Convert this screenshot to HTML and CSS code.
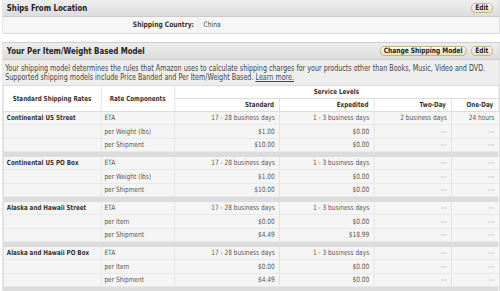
FILE: index.html
```html
<!DOCTYPE html>
<html>
<head>
<meta charset="utf-8">
<link rel="stylesheet" href="styles.css">
</head>
<body>
<div class="frame">
<div class="page">
  <section class="box">
    <div class="box-head">
      <h2>Ships From Location</h2>
      <div class="btns"><button class="btn">Edit</button></div>
    </div>
    <div class="kv">
      <span class="k">Shipping Country:</span>
      <span class="v">China</span>
    </div>
  </section>

  <section class="box box2">
    <div class="box-head">
      <h2>Your Per Item/Weight Based Model</h2>
      <div class="btns"><button class="btn">Change Shipping Model</button><button class="btn">Edit</button></div>
    </div>
    <div class="desc">
      <span class="line">Your shipping model determines the rules that Amazon uses to calculate shipping charges for your products other than Books, Music, Video and DVD.</span>
      <span class="line"><span>Supported shipping models include Price Banded and Per Item/Weight Based.</span> <a href="#">Learn more.</a></span>
    </div>
    <table class="rates">
      <colgroup>
        <col class="c1"><col class="c2"><col class="c3"><col class="c4"><col class="c5"><col class="c6">
      </colgroup>
      <thead>
        <tr>
          <th rowspan="2" class="ctr">Standard Shipping Rates</th>
          <th rowspan="2" class="ctr">Rate Components</th>
          <th colspan="4" class="ctr">Service Levels</th>
        </tr>
        <tr>
          <th class="r">Standard</th>
          <th class="r">Expedited</th>
          <th class="r">Two-Day</th>
          <th class="r">One-Day</th>
        </tr>
      </thead>
      <tbody>
        <tr><td class="name">Continental US Street</td><td>ETA</td><td class="r">17 - 28 business days</td><td class="r">1 - 3 business days</td><td class="r">2 business days</td><td class="r">24 hours</td></tr>
        <tr class="mid"><td></td><td>per Weight (lbs)</td><td class="r">$1.00</td><td class="r">$0.00</td><td class="r na">---</td><td class="r na">---</td></tr>
        <tr><td></td><td>per Shipment</td><td class="r">$10.00</td><td class="r">$0.00</td><td class="r na">---</td><td class="r na">---</td></tr>
        <tr class="sep"><td colspan="6"></td></tr>
        <tr><td class="name">Continental US PO Box</td><td>ETA</td><td class="r">17 - 28 business days</td><td class="r">1 - 3 business days</td><td class="r na">---</td><td class="r na">---</td></tr>
        <tr class="mid"><td></td><td>per Weight (lbs)</td><td class="r">$1.00</td><td class="r">$0.00</td><td class="r na">---</td><td class="r na">---</td></tr>
        <tr><td></td><td>per Shipment</td><td class="r">$10.00</td><td class="r">$0.00</td><td class="r na">---</td><td class="r na">---</td></tr>
        <tr class="sep"><td colspan="6"></td></tr>
        <tr><td class="name">Alaska and Hawaii Street</td><td>ETA</td><td class="r">17 - 28 business days</td><td class="r">1 - 3 business days</td><td class="r na">---</td><td class="r na">---</td></tr>
        <tr class="mid"><td></td><td>per Item</td><td class="r">$0.00</td><td class="r">$0.00</td><td class="r na">---</td><td class="r na">---</td></tr>
        <tr><td></td><td>per Shipment</td><td class="r">$4.49</td><td class="r">$18.99</td><td class="r na">---</td><td class="r na">---</td></tr>
        <tr class="sep"><td colspan="6"></td></tr>
        <tr><td class="name">Alaska and Hawaii PO Box</td><td>ETA</td><td class="r">17 - 28 business days</td><td class="r">1 - 3 business days</td><td class="r na">---</td><td class="r na">---</td></tr>
        <tr class="mid"><td></td><td>per Item</td><td class="r">$0.00</td><td class="r">$0.00</td><td class="r na">---</td><td class="r na">---</td></tr>
        <tr><td></td><td>per Shipment</td><td class="r">$4.49</td><td class="r">$0.00</td><td class="r na">---</td><td class="r na">---</td></tr>
        <tr class="sep"><td colspan="6"></td></tr>
      </tbody>
    </table>
  </section>
</div>
</div>
</body>
</html>
```

FILE: styles.css
```css
html, body {
  margin: 0;
  padding: 0;
  background: #ffffff;
}

.frame {
  width: 500px;
  height: 291px;
  overflow: hidden;
}

.page {
  width: 622px;
  padding-left: 2.5px;
  transform: scaleX(0.8);
  transform-origin: 0 0;
  font-family: "DejaVu Sans", Verdana, sans-serif;
  color: #333;
}

.box {
  border-left: 1px solid #d4d4d4;
  border-right: 1px solid #d4d4d4;
}

.box2 {
  margin-top: 8px;
  border-top: 1px solid #cfcfcf;
}

.box-head {
  display: flex;
  align-items: center;
  justify-content: space-between;
  height: 16px;
  padding: 0 8px 0 5px;
  background: linear-gradient(#eeeeee, #dcdcdc);
  border-bottom: 1px solid #cccccc;
}

.box-head h2 {
  margin: 0;
  font-size: 8.8px;
  font-weight: bold;
  color: #222;
}

.btns {
  display: flex;
  gap: 6px;
}

.btn {
  height: 10px;
  padding: 0 4px;
  border: 1px solid #c2b07a;
  border-radius: 5px;
  background: linear-gradient(#fffef6, #e6dfbf);
  font-family: "DejaVu Sans", Verdana, sans-serif;
  font-size: 7.4px;
  font-weight: bold;
  line-height: 8px;
  color: #222;
}

.kv {
  display: grid;
  grid-template-columns: 244px 1fr;
  height: 16px;
  background: #f6f6f6;
  border-bottom: 1px solid #d8d8d8;
  font-size: 7.5px;
  line-height: 16px;
}

.kv .k {
  text-align: right;
  padding-right: 4px;
  font-weight: bold;
  color: #333;
  border-right: 1px solid #e2e2e2;
}

.kv .v {
  padding-left: 7px;
  color: #444;
}

.desc {
  display: flex;
  flex-direction: column;
  padding: 3.5px 4px 2.5px 3px;
  background: #eeeeee;
  font-size: 8px;
  line-height: 9.5px;
  color: #444;
  white-space: nowrap;
}

.desc a {
  color: #1a4f9c;
}

.rates {
  width: 100%;
  border-collapse: collapse;
  table-layout: fixed;
}

.c1 { width: 122px; }
.c2 { width: 92px; }
.c3 { width: 131px; }
.c4 { width: 118px; }
.c5 { width: 97px; }
.c6 { width: auto; }

.rates th {
  height: 12px;
  padding: 0 6px;
  font-size: 7px;
  font-weight: bold;
  color: #333;
  background: #ffffff;
  border: 1px solid #dddddd;
  line-height: 12px;
}

.rates td {
  height: 12px;
  padding: 0 5px 0 4px;
  font-size: 7.3px;
  line-height: 12px;
  color: #555;
  background: #f5f5f5;
  border-bottom: 1px solid #e9e9e9;
  border-left: 1px solid #dedede;
  white-space: nowrap;
}

.rates tr.mid td {
  height: 13px;
  line-height: 13px;
}

.rates td.name {
  font-size: 7px;
  font-weight: bold;
  color: #333;
}

.ctr { text-align: center; }
.r { text-align: right; }

.rates td.na {
  color: #aaa;
}

.rates tr.sep td {
  height: 5px;
  line-height: 5px;
  padding: 0;
  background: #dcdcdc;
  border: none;
}
```
